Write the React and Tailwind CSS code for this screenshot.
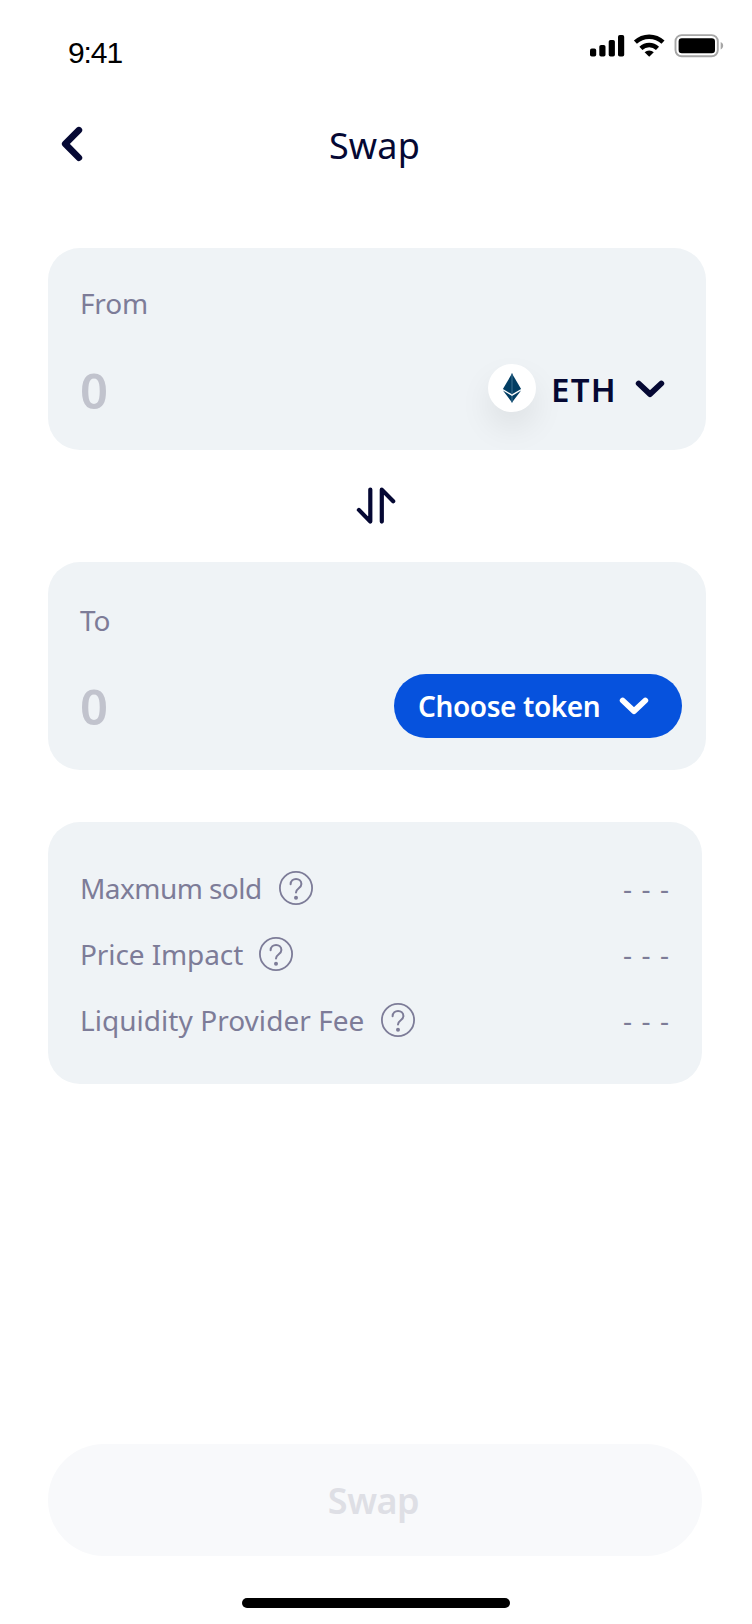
function Chevron({ className }) {
  return (
    <svg className={className} width="30" height="20" viewBox="0 0 30 20" fill="none" stroke="currentColor" strokeWidth="5.8" strokeLinecap="round" strokeLinejoin="round">
      <path d="M3.7 4.5 L15 15.2 L26.3 4.5" />
    </svg>
  );
}

function StatusIcons() {
  return (
    <svg className="mt-[30px]" width="136" height="32" viewBox="0 0 136 32" fill="none">
      <g fill="#000">
        <rect x="0" y="18.6" width="6.2" height="8" rx="1.8" />
        <rect x="9.3" y="15" width="6.2" height="11.6" rx="1.8" />
        <rect x="18.7" y="10" width="6.2" height="16.6" rx="1.8" />
        <rect x="28" y="5" width="6.2" height="21.6" rx="1.8" />
        <path d="M59.2 26.8 L54.6 22.2 A6.8 6.8 0 0 1 63.8 22.2 Z" />
      </g>
      <path d="M50.9 18.3 A12 12 0 0 1 67.5 18.3" stroke="#000" strokeWidth="4.4" />
      <path d="M45.4 12.2 A20 20 0 0 1 73 12.2" stroke="#000" strokeWidth="4.4" />
      <rect x="85.5" y="5.1" width="42.3" height="21.2" rx="6.2" stroke="#a6a6a6" strokeWidth="1.9" />
      <rect x="88.6" y="8.3" width="36.4" height="14.9" rx="3.2" fill="#000" />
      <path d="M130.7 12 C134 13.4 134 18 130.7 19.4 Z" fill="#a6a6a6" />
    </svg>
  );
}

function HelpIcon() {
  return (
    <svg width="34" height="34" viewBox="0 0 34 34" fill="none" stroke="#7d7c98" strokeLinecap="round">
      <circle cx="17" cy="17" r="16.1" strokeWidth="1.8" />
      <path d="M11.6 13.2 C11.8 6.1 22.4 6.3 22.4 13 C22.4 17.4 17 17 17 21.6" strokeWidth="2" />
      <circle cx="17" cy="26.7" r="2" fill="#7d7c98" stroke="none" />
    </svg>
  );
}

function Ethereum() {
  return (
    <svg width="20" height="30" viewBox="0 0 20 30">
      <path d="M10 .6 L.9 16 L10 21.3 Z" fill="#023e63" />
      <path d="M10 .6 L19.1 16 L10 21.3 Z" fill="#023e63" />
      <path d="M10 .6 V21.3" stroke="#35698a" strokeWidth="1.2" />
      <path d="M.9 17.6 L10 22.9 L19.1 17.6 L10 29.4 Z" fill="#023e63" />
      <path d="M10 22.9 V29.4" stroke="#35698a" strokeWidth="1.2" />
    </svg>
  );
}

function InfoRow({ label, className }) {
  return (
    <div className="flex h-[66px] items-center">
      <span className={`-mt-px shrink-0 whitespace-nowrap ${className}`}>{label}</span>
      <HelpIcon />
      <span className="-mt-px ml-auto tracking-[1.1px]">- - -</span>
    </div>
  );
}

export default function App() {
  return (
    <div className="flex h-[1624px] w-[752px] flex-col bg-white font-['Noto_Sans',sans-serif] text-[#050833]">
      <div className="flex h-[96px] shrink-0 justify-between pr-[26px] pl-[68px]">
        <span className="mt-[33px] h-10 font-['Liberation_Sans',sans-serif] text-[30px] leading-10 tracking-[-1.1px] text-black">9:41</span>
        <StatusIcons />
      </div>

      <header className="flex h-[96px] shrink-0 items-center px-[58px]">
        <svg width="30" height="40" viewBox="0 0 30 40" fill="none" stroke="currentColor" strokeWidth="6.6" strokeLinecap="round" strokeLinejoin="round">
          <path d="M20.9 6.2 L7.2 19.9 L20.9 33.7" />
        </svg>
        <h1 className="mt-[3px] flex-1 pr-[33px] text-center text-[36px] leading-[50px] tracking-[0.2px]">Swap</h1>
      </header>

      <section className="mt-14 ml-12 flex h-[202px] w-[658px] shrink-0 flex-col rounded-[32px] bg-[#eff3f6] pt-[35px] pl-8">
        <span className="text-[28px] leading-10 tracking-[-0.2px] text-[#7d7c98]">From</span>
        <div className="mt-[43px] flex h-12 items-center">
          <span className="text-[49px] leading-[48px] font-semibold text-[#c1c3cd]">0</span>
          <span className="mt-[-4px] ml-auto flex size-12 items-center justify-center rounded-full bg-white shadow-[0_16px_32px_rgba(0,0,0,0.08)]">
            <Ethereum />
          </span>
          <span className="ml-[15px] w-[84px] text-[33px] font-semibold tracking-[1.3px]">ETH</span>
          <Chevron className="mt-[-3px] mr-[41px]" />
        </div>
      </section>

      <div className="flex h-[112px] shrink-0 items-center justify-center">
        <svg width="40" height="40" viewBox="0 0 40 40" fill="none" stroke="currentColor" strokeWidth="4.2" strokeLinecap="round" strokeLinejoin="round">
          <path d="M14.3 3.6 V35.6 L2.9 23.9 M25.8 35.6 V3.6 L37.2 15.2" />
        </svg>
      </div>

      <section className="ml-12 flex h-[208px] w-[658px] shrink-0 flex-col rounded-[32px] bg-[#eff3f6] pt-[38px] pl-8">
        <span className="text-[28px] leading-10 text-[#7d7c98]">To</span>
        <div className="mt-[34px] flex h-16 items-center">
          <span className="text-[49px] leading-[48px] font-semibold text-[#c1c3cd]">0</span>
          <button className="mr-6 ml-auto flex h-16 w-[288px] items-center rounded-full bg-[#0652dd] pl-6 text-white">
            <span className="-mt-px w-[201px] text-left text-[28px] font-semibold tracking-[-0.4px] whitespace-nowrap">Choose token</span>
            <Chevron />
          </button>
        </div>
      </section>

      <section className="mt-[52px] ml-12 flex h-[262px] w-[654px] shrink-0 flex-col rounded-[32px] bg-[#eff3f6] px-8 pt-[33px] text-[28px] text-[#7d7c98]">
        <InfoRow label="Maxmum sold" className="w-[199px] tracking-[-0.55px]" />
        <InfoRow label="Price Impact" className="w-[179px] tracking-[-0.1px]" />
        <InfoRow label="Liquidity Provider Fee" className="w-[301px] tracking-[0.04px]" />
      </section>

      <button className="mt-auto ml-12 h-[112px] w-[654px] shrink-0 rounded-full bg-[#f8f9fb] pt-[2px] pr-[3px] text-[36px] font-semibold tracking-[-0.5px] text-[#dedfe5]">Swap</button>
      <div className="mt-[42px] mb-4 h-[10px] w-[268px] shrink-0 self-center rounded-full bg-black" />
    </div>
  );
}
